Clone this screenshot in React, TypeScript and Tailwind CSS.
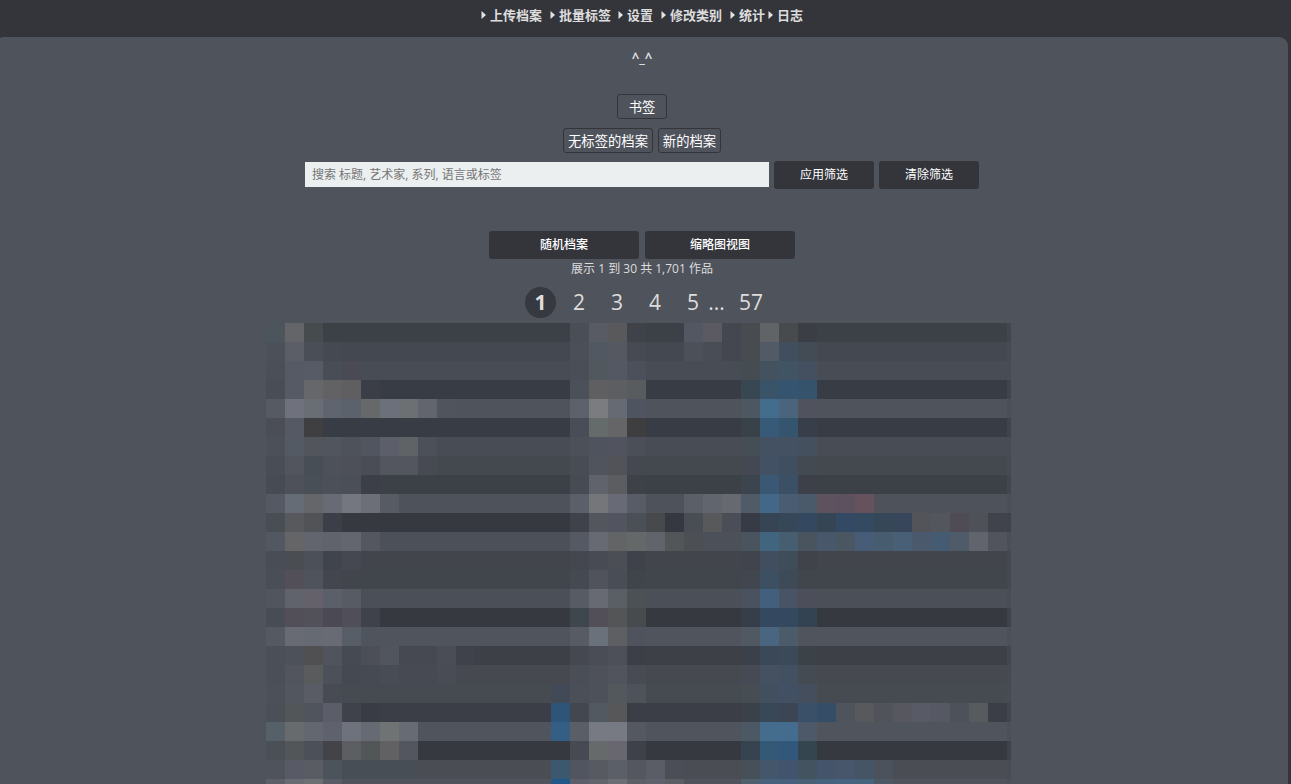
const navItems = [
  { label: "上传档案", gap: "mr-[8px]" },
  { label: "批量标签", gap: "mr-[7px]" },
  { label: "设置", gap: "mr-[8px]" },
  { label: "修改类别", gap: "mr-[8px]" },
  { label: "统计", gap: "mr-[3px]" },
  { label: "日志", gap: "mr-0" },
];

type Row = { base: string; runs: [number, string][] };

// Each run is a starting column followed by consecutive cell colours.
const rows: Row[] = [
  { base: "3c4047", runs: [[0, "4d555c 646568 464b4d"], [16, "4a4e57 585b64 59595c 3f4248"], [22, "535761 5b5962 44474f 484c51 606466 484b4d 3b3e45"]] },
  { base: "444850", runs: [[0, "4c5159 5b5e67 4a4e57 454951"], [16, "4a4f58 525861 555861 474a52"], [22, "4c5059 494d55 44474f 484c51 525a66 414e5e 434b54"]] },
  { base: "484c54", runs: [[0, "4b5058 565a64 565b65 494e56 494a53"], [16, "494e57 52595e 545862 4c505a"], [25, "464d52 44525f 415464 44505f"]] },
  { base: "383c44", runs: [[0, "484d56 565a64 66676a 626265 5f5f62 3b3e47"], [16, "4b5059 5f5f62 5d5e61 585c5f"], [25, "394752 395469 35546f 35546c"]] },
  { base: "4f535c", runs: [[0, "555a63 6f727c 686e73 60646e 5b626b 666869 6c707b 6c7073 62656d 50545d"], [16, "5d616b 7b7c80 666a72 4f5560"], [25, "4d5762 446c8d 4a657b 50525d"]] },
  { base: "383c44", runs: [[0, "4b4e57 555963 3f3f42"], [16, "494d57 656a6b 656568 3e3e41"], [25, "394249 365a77 35556e 383f4a"]] },
  { base: "484c54", runs: [[0, "4c5058 545a64 53555c 50555e 4d525b 50555f 5c5f69 606365 4c5059"], [16, "4c5059 4e535d 51545e 4a4f58"], [25, "454d55 445162 445162 44505d"]] },
  { base: "44484f", runs: [[0, "494e56 52555e 484e56 4d5159 4d5058 4a4d56 53565f 53565f 474a53"], [16, "484c55 50545d 515359 454850"], [25, "444852 425163 3f4f60 434a52"]] },
  { base: "3c4047", runs: [[0, "474c54 4e515a 494f57 4c5059 4b4f58 3c3f47"], [16, "474b53 60636c 5c5d60 3e4147"], [25, "3c444e 3a5874 3b5064 3d4049"]] },
  { base: "4e525b", runs: [[0, "555963 666c75 646669 686b74 747780 6c6f78 565b64"], [16, "5b5f69 757679 686b75 585c66"], [22, "5a5f68 61656d 676970 515b67 436887 4a5c72 4a5a6a 5e525f 5e515f 65525d"]] },
  { base: "363940", runs: [[0, "494d54 58595d 525356 3c3f48"], [16, "3f424a 54565e 52555f 4b4f56 48494c 353840 494d54 58595b 4c4e57 363b45 374454 364757 34485f 364553 344a64 344a60 364757 37465a 53545a 54565e 4f4c56 4f5159 40434c"]] },
  { base: "4c5058", runs: [[0, "535761 656467 62656d 60636c 64666f 545760"], [16, "555963 676a73 626466 656868 62646c 525658 4c5055"], [25, "4a545f 42657f 475d70 49545f 48576a 4a5762 475d77 475d6f 495f76 4a596b 455b72 505b69 62646d 51545c"]] },
  { base: "42454c", runs: [[0, "494e56 4a4d52 4c5059 40444c 454850"], [16, "44474f 484b54 4b4e54 3f424a"], [25, "41444c 404e5f 3f4d59 40434a"]] },
  { base: "41454c", runs: [[0, "494e57 524f59 4f535b 43464e 42454c"], [16, "454951 50535c 494d55 40444b"], [25, "41464f 3c5062 3e4b56"]] },
  { base: "4b4f57", runs: [[0, "50555e 60636c 64616b 5b5f69 575b64"], [16, "575b64 676a73 5a5e65 4c5156"], [25, "4a5260 42607d 485466 4c4f59"]] },
  { base: "363940", runs: [[0, "474c55 524f59 525058 4b4953 504e58 40424b"], [16, "3e464e 524f59 535556 484b4d"], [25, "363f49 34485f 34485e 344352"]] },
  { base: "50545c", runs: [[0, "555962 686b74 666a72 686b74 585e67"], [16, "575b64 6b717b 5e5f63 4e535d"], [25, "505861 4a657f 4c5b69"]] },
  { base: "3d4047", runs: [[0, "4b4f57 4d515a 505053 50545d 464a52 4c4f58 50555e 464951 464951 4a4d56 3f424a"], [16, "454850 4a4d56 4d5059 3c3f47"], [25, "3b414a 3a4857 3b4958 3b4248"]] },
  { base: "464950", runs: [[0, "4b4f57 52555e 595b5d 4c5059 454951 464a52 484c54 474a53 474a53 494c55"], [16, "4a4e56 4e515a 51545c 484b53"], [25, "454a54 455061 435062 444b53"]] },
  { base: "464a51", runs: [[0, "4c5058 52565f 595c65 484b54"], [15, "434a57 4b5058 4d525a 52585c 4e525a"], [25, "464d53 424f5f 425063 444e5d"]] },
  { base: "3b3e46", runs: [[0, "4b4f57 535658 50545d 5b5e68 3f424a 3a3c45"], [15, "2e5578 43474f 535960 575759 3b3e45"], [25, "3a4149 394857 3b4553 3a4f68 364d68 4f535c 58595d 50535a 575760 585b65 565963 4d5159 585b5d"]] },
  { base: "50545c", runs: [[0, "566068 676b6d 636870 5f626c 6e727c 666a72 707374 676b73"], [15, "345e84 5a5e66 777a82 777a82 545861"], [25, "4c5863 436c8d 436c8f 4d5868"]] },
  { base: "373940", runs: [[0, "4b5056 525658 4c5059 444448 5c5e62 535657 616163 53565f"], [16, "474a52 666a6b 686770 3e414a"], [25, "37434e 335976 31587b 354550"]] },
  { base: "4a4d54", runs: [[0, "4e535c 585b65 595c63 4c545b 484e56 484e56 484e56 484e56"], [15, "3b586f 505560 575a61 5a5f68 54575f 5b5d66 4c4e57"], [25, "475058 43566a 42536d 435360 43546b 47566a 455566 4b525b"]] },
  { base: "50535c", runs: [[0, "5c5f69 686b71 6c7073 585c66"], [15, "225887 5c5f69 62646c 6b6e75 5c6066 5e626c 5b5f64"], [25, "51606f 47617c 47617c 4a6075 46627d 45647f 47647d 4c5964"]] },
];

function cellsOf(row: Row): string[] {
  const cells: string[] = Array(40).fill("#" + row.base);
  for (const [start, colours] of row.runs) {
    colours.split(" ").forEach((c, i) => {
      cells[start + i] = "#" + c;
    });
  }
  return cells;
}

function MosaicTable() {
  return (
    <div className="ml-[266px] h-[461px] w-[745px] overflow-hidden">
      {rows.map((row, r) => (
        <div key={r} className="grid h-[19px] grid-cols-[repeat(39,19px)_4px]">
          {cellsOf(row).map((c, i) => (
            <div key={i} style={{ backgroundColor: c }}>
              {i === 39 && <div className="h-full bg-[#484b53]/50" />}
            </div>
          ))}
        </div>
      ))}
    </div>
  );
}

const outlined =
  "flex h-[25px] items-center justify-center rounded-[3px] border border-[#34353b] pt-[2px] text-[13.33px] leading-none text-white";
const solid =
  "flex h-[28px] items-center justify-center rounded-[3px] bg-[#34353b] text-[12px] leading-none text-white";

export default function App() {
  return (
    <div className="h-[784px] w-full overflow-hidden bg-[#34353b] font-['Open_Sans','Noto_Sans_CJK_SC',sans-serif] text-[#dddddd]">
      <nav className="flex h-[37px] pl-[481px] pt-[7px]">
        {navItems.map((n) => (
          <a key={n.label} className={"flex h-[17px] items-center text-[13px] font-bold leading-[17px] whitespace-nowrap " + n.gap}>
            <svg width="5" height="8" viewBox="0 0 5 8" className="mr-[4px] -translate-y-px">
              <path d="M0.5 0L5 4L0.5 8Z" fill="#e4e4e4" />
            </svg>
            {n.label}
          </a>
        ))}
      </nav>
      <main className="-ml-[5px] h-[747px] w-[1293px] overflow-hidden rounded-t-[9px] bg-[#4f535b] pl-[5px]">
        <div className="flex w-[1284px] flex-col items-center">
          <h1 className="h-[57px] pt-[11px] text-[13.33px] font-bold leading-[20px]">^_^</h1>
          <button className={outlined + " w-[50px]"}>书签</button>
          <div className="mt-[9px] flex gap-[5px]">
            <button className={outlined + " w-[90px]"}>无标签的档案</button>
            <button className={outlined + " w-[63px]"}>新的档案</button>
          </div>
          <div className="mt-[8px] flex h-[28px] gap-[5px]">
            <input
              className="mt-px h-[25px] w-[464px] bg-[#ebefef] px-[7px] text-[12px] outline-none placeholder:text-[#757575]"
              placeholder="搜索 标题, 艺术家, 系列, 语言或标签"
            />
            <button className={solid + " w-[100px]"}>应用筛选</button>
            <button className={solid + " w-[100px]"}>清除筛选</button>
          </div>
          <div className="mt-[42px] flex gap-[6px]">
            <button className={solid + " w-[150px] font-medium"}>随机档案</button>
            <button className={solid + " w-[150px] font-medium"}>缩略图视图</button>
          </div>
          <p className="h-[20px] text-[12px] leading-[19px]">展示 1 到 30 共 1,701 作品</p>
        </div>
        <div className="mt-[8px] flex h-[36px] pl-[525px] text-[21px] leading-[30px]">
          <span className="size-[31px] rounded-full bg-[#363940] text-center font-bold">1</span>
          <span className="ml-[4px] w-[38px] text-center">2</span>
          <span className="w-[38px] text-center">3</span>
          <span className="w-[38px] text-center">4</span>
          <span className="w-[38px] text-center">5</span>
          <span className="-ml-[4px] w-[17px] text-center">...</span>
          <span className="ml-[10px] w-[32px] text-center">57</span>
        </div>
        <MosaicTable />
      </main>
    </div>
  );
}
